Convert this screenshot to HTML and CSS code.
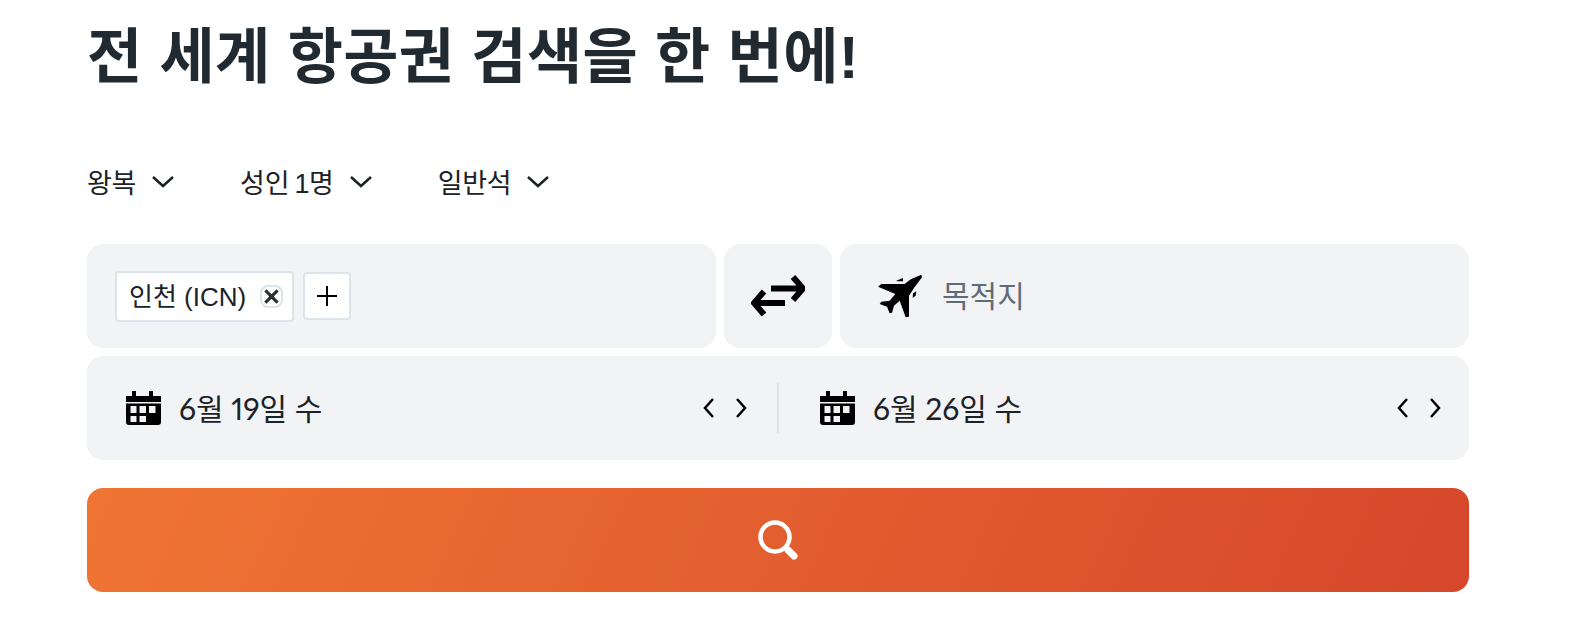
FILE: index.html
```html
<!DOCTYPE html>
<html lang="ko">
<head>
  <meta charset="UTF-8">
  <meta name="viewport" content="width=device-width, initial-scale=1.0">
  <title>항공권 검색</title>
  <link rel="stylesheet" href="styles.css">
</head>
<body>
  <div class="container">
    <h1 class="title">전 세계 항공권 검색을 한 번에!</h1>

    <div class="filters">
      <div class="filter filter-trip">왕복
        <svg class="chevron-down" viewBox="0 0 24 13"><path d="M2 2l10 9 10-9"/></svg>
      </div>
      <div class="filter filter-people">성인 1명
        <svg class="chevron-down" viewBox="0 0 24 13"><path d="M2 2l10 9 10-9"/></svg>
      </div>
      <div class="filter">일반석
        <svg class="chevron-down" viewBox="0 0 24 13"><path d="M2 2l10 9 10-9"/></svg>
      </div>
    </div>

    <div class="route">
      <div class="box origin">
        <div class="chip">인천 (ICN)
          <span class="chip-x">
            <svg viewBox="0 0 14 14"><path d="M2 2l10 10M12 2L2 12"/></svg>
          </span>
        </div>
        <div class="add">
          <svg viewBox="0 0 20 20"><path d="M10 0v20M0 10h20"/></svg>
        </div>
      </div>
      <div class="box swap">
        <svg class="swap-icon" viewBox="0 0 54 42">
          <path d="M20 13.5h29M42 2l10 11.500L42 25M34 28H5M13 16.500L3 28l10 11.500"/>
        </svg>
      </div>
      <div class="box dest">
        <svg class="plane" viewBox="20 20 132 132">
          <path d="M150 22l2 8-24 32-15 23v63l-10 2-18-50-17 15-6 21-7 2-8-20-22-8 5-7 25-3 17-20-52-22 10-8h70l18-14z"/>
          <path d="M75 40l20-8v10H78zM125 78l10-6-2 13-9 7z"/>
        </svg>
        <span class="placeholder">목적지</span>
      </div>
    </div>

    <div class="box dates">
      <div class="date date-from">
        <svg class="calendar" viewBox="0 0 35 34">
          <path d="M6 0h4v5h13V0h4v5h8v6H0V5h6zM0 12.500h35V31a3 3 0 0 1-3 3H3a3 3 0 0 1-3-3zM4.500 15v7h6v-7zm9 0v7H20v-7zm9.500 0v7h6.500v-7zM4.500 25v6h6v-6zm9 0v6H20v-6z" fill-rule="evenodd"/>
        </svg>
        <span class="date-text">6월 19일 수</span>
        <div class="steps">
          <svg viewBox="0 0 11 20"><path d="M10 1L2 10l8 9"/></svg>
          <svg viewBox="0 0 11 20"><path d="M1 1l8 9-8 9"/></svg>
        </div>
      </div>
      <div class="date date-to">
        <svg class="calendar" viewBox="0 0 35 34">
          <path d="M6 0h4v5h13V0h4v5h8v6H0V5h6zM0 12.500h35V31a3 3 0 0 1-3 3H3a3 3 0 0 1-3-3zM4.500 15v7h6v-7zm9 0v7H20v-7zm9.500 0v7h6.500v-7zM4.500 25v6h6v-6zm9 0v6H20v-6z" fill-rule="evenodd"/>
        </svg>
        <span class="date-text">6월 26일 수</span>
        <div class="steps">
          <svg viewBox="0 0 11 20"><path d="M10 1L2 10l8 9"/></svg>
          <svg viewBox="0 0 11 20"><path d="M1 1l8 9-8 9"/></svg>
        </div>
      </div>
    </div>

    <button class="search" type="button">
      <svg viewBox="0 0 40 40">
        <circle cx="17" cy="17" r="14.500"/>
        <path class="handle" d="M30 30l6 6"/>
      </svg>
    </button>
  </div>
</body>
</html>
```

FILE: styles.css
```css
* {
  box-sizing: border-box;
  margin: 0;
  padding: 0;
}
body {
  font-family: "Liberation Sans", "Noto Sans CJK KR", sans-serif;
  background-color: #fff;
  color: #1b2227;
}
.container {
  width: 1382px;
  margin-left: 87px;
  padding-top: 22px;
}
.title {
  font-size: 60px;
  line-height: 72px;
  font-weight: 700;
  letter-spacing: 0.35px;
  color: #212a30;
}
.filters {
  display: flex;
  margin-top: 67px;
  height: 40px;
  align-items: center;
  font-size: 27px;
  letter-spacing: -0.3px;
}
.filter {
  display: flex;
  align-items: center;
  gap: 15px;
  margin-right: 65px;
}
.filter-people {
  word-spacing: -2px;
}
.chevron-down {
  width: 24px;
  height: 13px;
  fill: none;
  stroke: #1b2227;
  stroke-width: 2.5;
}
.route {
  display: flex;
  gap: 8px;
  margin-top: 43px;
}
.box {
  height: 104px;
  background-color: #f1f3f5;
  border-radius: 16px;
  display: flex;
  align-items: center;
}
.origin {
  width: 629px;
  padding-left: 28px;
  gap: 9px;
}
.chip {
  display: flex;
  align-items: center;
  height: 51px;
  width: 179px;
  padding: 0 0 4px 12px;
  gap: 14px;
  background-color: #fff;
  border: 2px solid #dce3ea;
  border-radius: 4px;
  font-size: 26px;
}
.chip-x {
  width: 23px;
  height: 23px;
  margin-top: 4px;
  display: flex;
  align-items: center;
  justify-content: center;
  border: 2px solid #dce3ea;
  border-radius: 8px;
}
.chip-x svg {
  width: 17px;
  height: 17px;
  flex: none;
  fill: none;
  stroke: #2a3238;
  stroke-width: 2.6;
}
.add {
  width: 48px;
  height: 48px;
  display: flex;
  align-items: center;
  justify-content: center;
  background-color: #fff;
  border: 2px solid #dce3ea;
  border-radius: 4px;
}
.add svg {
  width: 20px;
  height: 20px;
  fill: none;
  stroke: #000;
  stroke-width: 2;
}
.swap {
  width: 108px;
  justify-content: center;
}
.swap-icon {
  width: 54px;
  height: 42px;
  fill: none;
  stroke: #000;
  stroke-width: 6;
}
.dest {
  width: 629px;
  padding-left: 38px;
  gap: 20px;
}
.plane {
  width: 44px;
  height: 44px;
}
.placeholder {
  font-size: 30px;
  color: #5f6b75;
  padding-bottom: 4px;
}
.dates {
  margin-top: 8px;
  display: grid;
  grid-template-columns: 692px 690px;
}
.date {
  display: flex;
  align-items: center;
  height: 50px;
}
.date-from {
  padding: 0 30px 0 39px;
  border-right: 2px solid #dde3ea;
}
.date-to {
  padding: 0 28px 0 41px;
}
.calendar {
  width: 35px;
  height: 34px;
  fill: #000;
}
.date-text {
  margin-left: 18px;
  font-family: Lato, "Noto Sans CJK KR", sans-serif;
  font-size: 30px;
  font-variant-numeric: proportional-nums;
  padding-bottom: 3px;
}
.steps {
  margin-left: auto;
  display: flex;
  gap: 22px;
}
.steps svg {
  width: 11px;
  height: 20px;
  fill: none;
  stroke: #000;
  stroke-width: 2.5;
}
.search {
  display: flex;
  align-items: center;
  justify-content: center;
  width: 100%;
  height: 104px;
  margin-top: 28px;
  border: none;
  border-radius: 16px;
  background: linear-gradient(115deg, #f07534, #d6472b);
}
.search svg {
  width: 40px;
  height: 40px;
  fill: none;
  stroke: #fff;
  stroke-width: 4.5;
}
.search .handle {
  stroke-width: 7;
  stroke-linecap: round;
}
```
